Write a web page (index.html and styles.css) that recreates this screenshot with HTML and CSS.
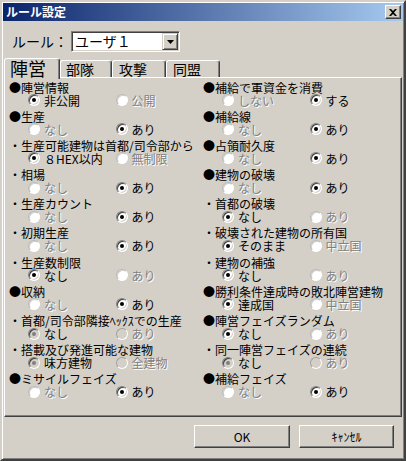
FILE: index.html
```html
<!DOCTYPE html>
<html lang="ja">
<head>
<meta charset="utf-8">
<title>ルール設定</title>
<link rel="stylesheet" href="styles.css">
</head>
<body>
<div class="window">
  <div class="titlebar">
    <span class="title">ルール設定</span>
    <span class="close"><svg width="8" height="7" viewBox="0 0 8 7"><path d="M0 0h2l2 2 2-2h2L5 3.5 8 7H6L4 5 2 7H0l3-3.5z" fill="#000"/></svg></span>
  </div>
  <div class="content">
    <div class="rule-row">
      <span class="rule-label">ルール：</span>
      <div class="combo">
        <span class="combo-text">ユーザ１</span>
        <span class="combo-btn"><svg width="7" height="4" viewBox="0 0 7 4"><path d="M0 0h7L3.5 4z" fill="#000"/></svg></span>
      </div>
    </div>
    <div class="tabs">
      <div class="tab active t1">陣営</div>
      <div class="tab t2">部隊</div>
      <div class="tab t3">攻撃</div>
      <div class="tab t4">同盟</div>
    </div>
    <div class="panel">
      <div class="col">
        <div class="group"><div class="glabel">●陣営情報</div><div class="opts"><span class="opt"><i class="radio on"></i>非公開</span><span class="opt dim"><i class="radio off"></i>公開</span></div></div>
        <div class="group"><div class="glabel">●生産</div><div class="opts"><span class="opt dim"><i class="radio off"></i>なし</span><span class="opt"><i class="radio on"></i>あり</span></div></div>
        <div class="group"><div class="glabel">・生産可能建物は首都/司令部から</div><div class="opts"><span class="opt"><i class="radio on"></i>８HEX以内</span><span class="opt dim"><i class="radio off"></i>無制限</span></div></div>
        <div class="group"><div class="glabel">・相場</div><div class="opts"><span class="opt dim"><i class="radio off"></i>なし</span><span class="opt"><i class="radio on"></i>あり</span></div></div>
        <div class="group"><div class="glabel">・生産カウント</div><div class="opts"><span class="opt dim"><i class="radio off"></i>なし</span><span class="opt"><i class="radio on"></i>あり</span></div></div>
        <div class="group"><div class="glabel">・初期生産</div><div class="opts"><span class="opt dim"><i class="radio off"></i>なし</span><span class="opt"><i class="radio on"></i>あり</span></div></div>
        <div class="group"><div class="glabel">・生産数制限</div><div class="opts"><span class="opt"><i class="radio on"></i>なし</span><span class="opt dim"><i class="radio off"></i>あり</span></div></div>
        <div class="group"><div class="glabel">●収納</div><div class="opts"><span class="opt dim"><i class="radio off"></i>なし</span><span class="opt"><i class="radio on"></i>あり</span></div></div>
        <div class="group"><div class="glabel">・首都/司令部隣接ﾍｯｸｽでの生産</div><div class="opts"><span class="opt"><i class="radio don"></i>なし</span><span class="opt dim"><i class="radio doff"></i>あり</span></div></div>
        <div class="group"><div class="glabel">・搭載及び発進可能な建物</div><div class="opts"><span class="opt"><i class="radio don"></i>味方建物</span><span class="opt dim"><i class="radio doff"></i>全建物</span></div></div>
        <div class="group"><div class="glabel">●ミサイルフェイズ</div><div class="opts"><span class="opt dim"><i class="radio off"></i>なし</span><span class="opt"><i class="radio on"></i>あり</span></div></div>
      </div>
      <div class="col">
        <div class="group"><div class="glabel">●補給で軍資金を消費</div><div class="opts"><span class="opt dim"><i class="radio off"></i>しない</span><span class="opt"><i class="radio on"></i>する</span></div></div>
        <div class="group"><div class="glabel">●補給線</div><div class="opts"><span class="opt dim"><i class="radio off"></i>なし</span><span class="opt"><i class="radio on"></i>あり</span></div></div>
        <div class="group"><div class="glabel">●占領耐久度</div><div class="opts"><span class="opt dim"><i class="radio off"></i>なし</span><span class="opt"><i class="radio on"></i>あり</span></div></div>
        <div class="group"><div class="glabel">●建物の破壊</div><div class="opts"><span class="opt dim"><i class="radio off"></i>なし</span><span class="opt"><i class="radio on"></i>あり</span></div></div>
        <div class="group"><div class="glabel">・首都の破壊</div><div class="opts"><span class="opt"><i class="radio on"></i>なし</span><span class="opt dim"><i class="radio off"></i>あり</span></div></div>
        <div class="group"><div class="glabel">・破壊された建物の所有国</div><div class="opts"><span class="opt"><i class="radio on"></i>そのまま</span><span class="opt dim"><i class="radio off"></i>中立国</span></div></div>
        <div class="group"><div class="glabel">・建物の補強</div><div class="opts"><span class="opt"><i class="radio on"></i>なし</span><span class="opt dim"><i class="radio off"></i>あり</span></div></div>
        <div class="group"><div class="glabel">●勝利条件達成時の敗北陣営建物</div><div class="opts"><span class="opt"><i class="radio on"></i>達成国</span><span class="opt dim"><i class="radio off"></i>中立国</span></div></div>
        <div class="group"><div class="glabel">●陣営フェイズランダム</div><div class="opts"><span class="opt"><i class="radio on"></i>なし</span><span class="opt dim"><i class="radio off"></i>あり</span></div></div>
        <div class="group"><div class="glabel">・同一陣営フェイズの連続</div><div class="opts"><span class="opt"><i class="radio don"></i>なし</span><span class="opt dim"><i class="radio doff"></i>あり</span></div></div>
        <div class="group"><div class="glabel">●補給フェイズ</div><div class="opts"><span class="opt dim"><i class="radio off"></i>なし</span><span class="opt"><i class="radio on"></i>あり</span></div></div>
      </div>
    </div>
    <div class="buttons">
      <div class="btn ok">OK</div>
      <div class="btn cancel">ｷｬﾝｾﾙ</div>
    </div>
  </div>
</div>
</body>
</html>
```
FILE: styles.css
```css
* { box-sizing: border-box; }
html, body { margin: 0; padding: 0; }
body {
  width: 406px;
  height: 461px;
  background: #D4D0C8;
  font-family: "Noto Sans CJK JP", "Noto Sans", sans-serif;
  font-size: 12px;
  color: #000;
  overflow: hidden;
}
.window {
  width: 406px;
  height: 461px;
  border: 2px solid;
  border-color: #D4D0C8 #404040 #404040 #D4D0C8;
  box-shadow: inset 1px 1px #fff, inset -1px -1px #808080;
  padding: 1px;
  display: flex;
  flex-direction: column;
}
.titlebar {
  height: 18px;
  background: linear-gradient(to right, #0A246A, #A6CAF0);
  display: flex;
  align-items: center;
  justify-content: space-between;
  padding: 0 2px 0 3px;
}
.title {
  color: #fff;
  font-weight: bold;
  font-size: 12px;
  line-height: 18px;
}
.close {
  width: 16px;
  height: 14px;
  background: #D4D0C8;
  border: 1px solid;
  border-color: #fff #404040 #404040 #fff;
  box-shadow: inset -1px -1px #808080;
  display: flex;
  align-items: center;
  justify-content: center;
}
.content {
  flex: 1;
  display: flex;
  flex-direction: column;
}
.rule-row {
  display: flex;
  align-items: center;
  margin-top: 10px;
  height: 21px;
  padding-left: 9px;
}
.rule-label {
  font-size: 14px;
  line-height: 21px;
  width: 59px;
}
.combo {
  width: 109px;
  height: 21px;
  background: #fff;
  border: 1px solid;
  border-color: #808080 #fff #fff #808080;
  box-shadow: inset 1px 1px #404040, inset -1px -1px #D4D0C8;
  display: flex;
  align-items: center;
  padding: 1px;
}
.combo-text {
  flex: 1;
  font-size: 14px;
  line-height: 17px;
  padding-left: 2px;
}
.combo-btn {
  width: 16px;
  height: 17px;
  background: #D4D0C8;
  border: 1px solid;
  border-color: #D4D0C8 #404040 #404040 #D4D0C8;
  box-shadow: inset 1px 1px #fff, inset -1px -1px #808080;
  display: flex;
  align-items: center;
  justify-content: center;
}
.tabs {
  display: flex;
  align-items: flex-end;
  margin-top: 6px;
  margin-left: 1px;
  height: 19px;
  position: relative;
  z-index: 1;
}
.tab {
  height: 17px;
  border: 1px solid;
  border-bottom: none;
  border-color: #fff #404040 transparent #fff;
  border-radius: 3px 3px 0 0;
  box-shadow: inset -1px 0 #808080;
  padding-left: 5px;
  font-size: 14px;
  line-height: 16px;
  background: #D4D0C8;
  white-space: nowrap;
}
.tab.active {
  height: 21px;
  margin-bottom: -2px;
  font-size: 18px;
  line-height: 19px;
}
.t1 { width: 56px; }
.t2 { width: 52px; }
.t3 { width: 54px; padding-left: 6px; }
.t4 { width: 54px; padding-left: 6px; }
.panel {
  margin-left: 1px;
  width: 398px;
  height: 340px;
  border: 1px solid;
  border-color: #fff #404040 #404040 #fff;
  box-shadow: inset -1px -1px #808080;
  display: flex;
  padding: 2.5px 0 0 4px;
}
.col {
  width: 194px;
  display: flex;
  flex-direction: column;
}
.group {
  height: 29.2px;
  flex: none;
}
.glabel {
  height: 13px;
  line-height: 13px;
  white-space: nowrap;
}
.opts {
  display: flex;
  height: 13px;
  padding-left: 19px;
}
.opt {
  width: 96px;
  display: flex;
  align-items: center;
  gap: 4px;
  line-height: 13px;
  white-space: nowrap;
}
.opt.dim {
  color: #808080;
  text-shadow: 1px 1px #fff;
}
.radio {
  width: 12px;
  height: 12px;
  border-radius: 50%;
  border: 1px solid;
  border-color: #808080 #fff #fff #808080;
  box-shadow: inset 1px 1px #404040, inset -1px -1px #D4D0C8;
  background: #fff;
  display: flex;
  align-items: center;
  justify-content: center;
  flex: none;
}
.radio.on::after,
.radio.don::after {
  content: "";
  width: 4px;
  height: 4px;
  border-radius: 50%;
  background: #000;
}
.radio.off {
  border-color: #b8b8b8 #fff #fff #b8b8b8;
  box-shadow: inset 1px 1px #d0d0d0;
}
.radio.don {
  background: #D4D0C8;
}
.radio.don::after {
  background: #808080;
}
.radio.doff {
  background: #D4D0C8;
  border-color: #a0a0a0 #fff #fff #a0a0a0;
  box-shadow: none;
}
.buttons {
  display: flex;
  justify-content: flex-end;
  gap: 9px;
  margin-top: 8px;
  padding-right: 9px;
}
.btn {
  height: 23px;
  border: 1px solid;
  border-color: #fff #404040 #404040 #fff;
  box-shadow: inset -1px -1px #808080;
  font-size: 12px;
  display: flex;
  align-items: center;
  justify-content: center;
}
.ok { width: 96px; }
.cancel { width: 95px; }
```
